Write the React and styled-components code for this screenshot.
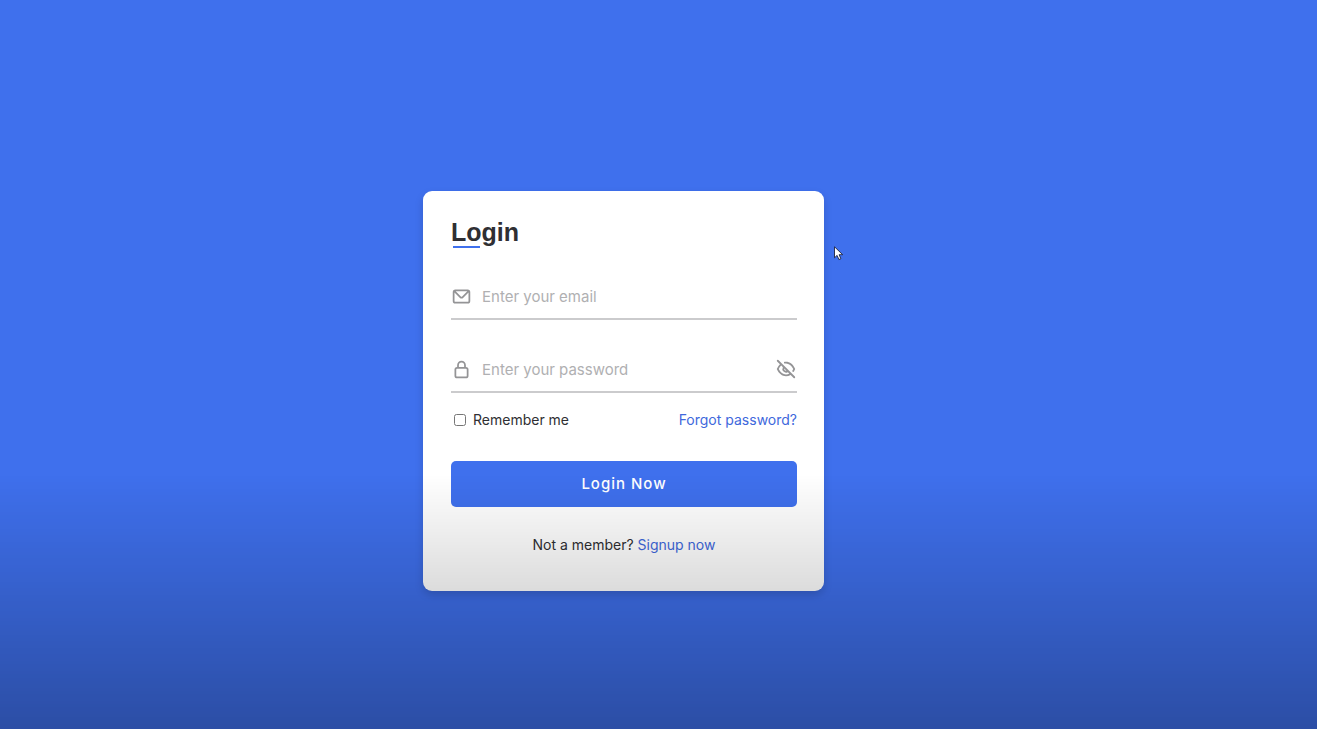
import React, { useState } from "react";
import styled, { createGlobalStyle } from "styled-components";

const blue = "#3f70ed";
const ink = "#2f2f33";

const GlobalStyle = createGlobalStyle`
  * { box-sizing: border-box; }
  body {
    margin: 0;
    background: ${blue};
    color: ${ink};
    font-family: Inter, "Open Sans", sans-serif;
  }
`;

const Page = styled.main`
  display: flex;
  align-items: center;
  justify-content: center;
  min-height: 100vh;
  padding: 53px 70px 0 0;
`;

const Shade = styled.div`
  position: fixed;
  inset: 0;
  pointer-events: none;
  background: linear-gradient(rgba(0, 0, 0, 0) 65%, rgba(0, 0, 0, 0.3) 100%);
`;

const Card = styled.section`
  position: relative;
  width: 100%;
  max-width: 401px;
  padding: 28px 27px 36px 28px;
  border-radius: 9px;
  background: #fff;
  box-shadow: 0 4px 9px rgba(0, 0, 0, 0.15);
`;

const Title = styled.h1`
  margin: 0 0 26px;
  font: 700 25px/27px "Liberation Sans", Arial, sans-serif;

  &::after {
    content: "";
    display: block;
    width: 27px;
    height: 2px;
    margin-left: 2px;
    background: ${blue};
  }
`;

const Form = styled.form`
  display: flex;
  flex-direction: column;
`;

const Field = styled.label`
  display: flex;
  align-items: center;
  gap: 10px;
  height: 46px;
  margin-bottom: ${(p) => p.$gap}px;
  border-bottom: 2px solid #cbcbcd;
  color: #949496;
`;

const TextInput = styled.input`
  flex: 1;
  min-width: 0;
  padding: 2px 0 0;
  border: 0;
  outline: 0;
  background: none;
  color: ${ink};
  font: 400 15px/22px Inter, "Open Sans", sans-serif;

  &::placeholder { color: #b0b0b2; opacity: 1; }
`;

const Icon = styled.svg`
  flex: none;
  display: block;
  width: ${(p) => p.$size}px;
  height: ${(p) => p.$size}px;
  fill: currentColor;
`;

const IconButton = styled.button`
  padding: 0;
  border: 0;
  background: none;
  color: #949496;
  cursor: pointer;
`;

const Options = styled.div`
  display: flex;
  align-items: center;
  justify-content: space-between;
  margin-bottom: 31px;
  font-size: 14px;
  line-height: 20px;
`;

const Remember = styled.label`
  display: flex;
  align-items: center;
  gap: 7px;
  padding-left: 3px;
`;

const Checkbox = styled.input`
  width: 12px;
  height: 12px;
  margin: 0;
`;

const Link = styled.a`
  color: #4068dc;
  text-decoration: none;
`;

const Submit = styled.button`
  height: 46px;
  border: 0;
  border-radius: 5px;
  background: ${blue};
  color: #fff;
  font: 500 15px/24px Inter, "Open Sans", sans-serif;
  letter-spacing: 1px;
  cursor: pointer;
`;

const Signup = styled.p`
  margin: 28px 0 0;
  text-align: center;
  font-size: 14px;
  line-height: 20px;
`;

const Pointer = styled.svg`
  position: absolute;
  top: 55px;
  left: calc(100% + 10px);
  width: 10px;
  height: 15px;
`;

const icons = {
  mail: "M19,4H5A3,3,0,0,0,2,7V17a3,3,0,0,0,3,3H19a3,3,0,0,0,3-3V7A3,3,0,0,0,19,4Zm-.41,2-5.88,5.88a1,1,0,0,1-1.42,0L5.41,6ZM20,17a1,1,0,0,1-1,1H5a1,1,0,0,1-1-1V7.41l5.88,5.88a3,3,0,0,0,4.24,0L20,7.41Z",
  lock: "M17,9V7A5,5,0,0,0,7,7V9a3,3,0,0,0-3,3v7a3,3,0,0,0,3,3H17a3,3,0,0,0,3-3V12A3,3,0,0,0,17,9ZM9,7a3,3,0,0,1,6,0V9H9Zm9,12a1,1,0,0,1-1,1H7a1,1,0,0,1-1-1V12a1,1,0,0,1,1-1H17a1,1,0,0,1,1,1Z",
  eyeOff: "M10.94,6.08A6.93,6.93,0,0,1,12,6c3.18,0,6.17,2.29,7.91,6a15.23,15.23,0,0,1-.9,1.64,1,1,0,0,0-.16.55,1,1,0,0,0,1.86.5,15.77,15.77,0,0,0,1.21-2.3,1,1,0,0,0,0-.79C19.9,6.91,16.1,4,12,4a7.77,7.77,0,0,0-1.4.12,1,1,0,1,0,.34,2ZM3.71,2.29A1,1,0,0,0,2.29,3.71L5.39,6.8a14.62,14.62,0,0,0-3.31,4.8,1,1,0,0,0,0,.8C4.1,17.09,7.9,20,12,20a9.26,9.26,0,0,0,5.05-1.54l3.24,3.25a1,1,0,0,0,1.42,0,1,1,0,0,0,0-1.42Zm6.36,9.19,2.45,2.45A1.81,1.81,0,0,1,12,14a2,2,0,0,1-2-2A1.81,1.81,0,0,1,10.07,11.48ZM12,18c-3.18,0-6.17-2.29-7.9-6A12.09,12.09,0,0,1,6.8,8.21L8.57,10A4,4,0,0,0,14,15.43L15.59,17A7.24,7.24,0,0,1,12,18Z",
};

function Glyph({ name, size = 21 }) {
  return (
    <Icon viewBox="0 0 24 24" $size={size} aria-hidden="true">
      <path d={icons[name]} />
    </Icon>
  );
}

export default function App() {
  const [visible, setVisible] = useState(false);
  return (
    <>
      <GlobalStyle />
      <Page>
        <Card>
          <Title>Login</Title>
          <Form onSubmit={(e) => e.preventDefault()}>
            <Field htmlFor="email" $gap={27}>
              <Glyph name="mail" />
              <TextInput id="email" type="email" placeholder="Enter your email" aria-label="Email" />
            </Field>
            <Field htmlFor="password" $gap={17}>
              <Glyph name="lock" />
              <TextInput
                id="password"
                type={visible ? "text" : "password"}
                placeholder="Enter your password"
                aria-label="Password"
              />
              <IconButton type="button" aria-label="Show password" onClick={() => setVisible(!visible)}>
                <Glyph name="eyeOff" size={22} />
              </IconButton>
            </Field>
            <Options>
              <Remember htmlFor="remember">
                <Checkbox id="remember" type="checkbox" />
                Remember me
              </Remember>
              <Link href="#forgot">Forgot password?</Link>
            </Options>
            <Submit type="submit">Login Now</Submit>
          </Form>
          <Signup>
            Not a member? <Link href="#signup">Signup now</Link>
          </Signup>
          <Pointer viewBox="0 0 10 15" aria-hidden="true">
            <path d="M.5.8v11l2.6-2.4 1.8 4.2 2-.9-1.8-4h3.6z" fill="#fff" stroke="#1c2340" strokeWidth=".9" />
          </Pointer>
        </Card>
      </Page>
      <Shade />
    </>
  );
}
